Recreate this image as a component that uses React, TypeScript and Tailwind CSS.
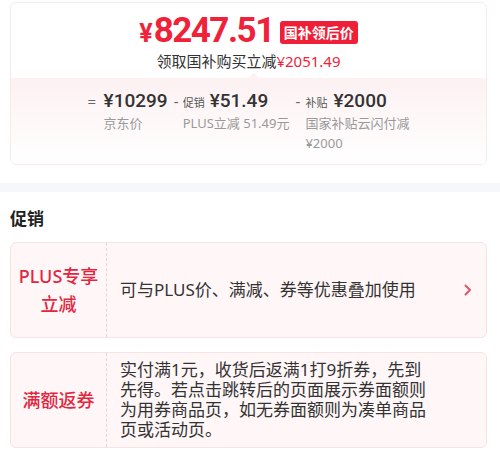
import React from "react";

const cjk = { fontFamily: '"Noto Sans", "Noto Sans CJK SC", sans-serif' };
const num = { fontFamily: 'Roboto, "Noto Sans CJK SC", sans-serif' };

function Breakdown() {
  return (
    <div className="relative bg-gradient-to-b from-[#fdf1f2] to-white pt-[11px] pb-[11px]">
      {/* little notch pointing at the price */}
      <span className="absolute -top-[5px] left-[238px] h-0 w-0 border-x-[5px] border-b-[5px] border-x-transparent border-b-[#fdf1f2]" />
      <div className="flex justify-center pl-[2px]" style={cjk}>
        <div className="flex items-start">
          <span className="mr-[8px] w-[8px] text-[15px] leading-[24px] text-[#666]">=</span>
          <div className="flex flex-col">
            <span className="h-[24px] text-[19px] font-medium leading-[24px] text-[#333]" style={num}>
              ¥10299
            </span>
            <span className="text-[13px] leading-[20px] text-[#999]">京东价</span>
          </div>
        </div>
        <div className="ml-[6px] flex items-start">
          <span className="mr-[5px] w-[4px] text-[15px] leading-[24px] text-[#666]">-</span>
          <div className="flex flex-col">
            <span className="flex h-[24px] items-baseline leading-[24px]">
              <span className="mr-[5px] text-[11px] text-[#555]">促销</span>
              <span className="text-[19px] font-medium text-[#333]" style={num}>
                ¥51.49
              </span>
            </span>
            <span className="whitespace-nowrap text-[13px] leading-[20px] text-[#999]">
              PLUS立减 51.49元
            </span>
          </div>
        </div>
        <div className="ml-[6px] flex items-start">
          <span className="mr-[6px] w-[4px] text-[15px] leading-[24px] text-[#666]">-</span>
          <div className="flex w-[106px] flex-col">
            <span className="flex h-[24px] items-baseline leading-[24px]">
              <span className="mr-[6px] text-[11px] text-[#555]">补贴</span>
              <span className="text-[19px] font-medium text-[#333]" style={num}>
                ¥2000
              </span>
            </span>
            <span className="text-[13px] leading-[20px] text-[#999]">
              国家补贴云闪付减¥2000
            </span>
          </div>
        </div>
      </div>
    </div>
  );
}

function PromoCard({
  label,
  children,
  arrow,
}: {
  label: React.ReactNode;
  children: React.ReactNode;
  arrow?: boolean;
}) {
  return (
    <div className="flex min-h-[96px] overflow-hidden rounded-md border border-[#f6e3e6] bg-[#fff6f7]">
      <div className="flex w-[96px] shrink-0 items-center justify-center border-r border-dashed border-[#ead3d7] text-center text-[18px] font-medium leading-[28px] text-[#e3263f]">
        {label}
      </div>
      <div className="flex flex-1 items-center pl-[13px] pr-[14px]">
        <div className="w-[308px] text-[17px] leading-[20px] text-[#333]">{children}</div>
        {arrow && (
          <svg className="ml-auto" width="8" height="12" viewBox="0 0 8 12" fill="none">
            <path d="M1.5 1.5 6 6l-4.5 4.5" stroke="#e0566b" strokeWidth="2" strokeLinecap="round" strokeLinejoin="round" />
          </svg>
        )}
      </div>
    </div>
  );
}

export default function App() {
  return (
    <div className="h-[453px] w-[500px] overflow-hidden bg-white" style={cjk}>
      <div className="ml-[10px] mr-[13px] mt-[2px] overflow-hidden rounded-md border border-[#f8eaec] bg-white">
        <div className="flex flex-col items-center pt-[8px]">
          <div className="flex h-[40px] items-center">
            <span className="flex h-[40px] items-baseline font-bold text-[#f0223a]" style={num}>
              <span className="mr-[1px] text-[25px] leading-[40px]">¥</span>
              <span className="text-[35px] leading-[40px] tracking-[-1.5px]">8247.51</span>
            </span>
            <span className="ml-[6px] mt-[3px] h-[23px] rounded-[3px] bg-[#ee1f37] px-[4px] text-[14px] font-bold leading-[23px] text-white">
              国补领后价
            </span>
          </div>
          <div className="h-[20px] text-[15px] leading-[20px] text-[#333]">
            领取国补购买立减<span className="text-[#f0223a]">¥2051.49</span>
          </div>
        </div>
        <div className="mt-[7px]">
          <Breakdown />
        </div>
      </div>

      <div className="mt-[18px] h-[9px] bg-[#f5f7fa]" />

      <div className="px-[10px] pr-[13px]">
        <h2 className="mt-[15px] h-[24px] text-[17px] font-bold leading-[24px] text-[#222]">促销</h2>
        <div className="mt-[11px]">
          <PromoCard
            arrow
            label={
              <>
                PLUS专享
                <br />
                立减
              </>
            }
          >
            可与PLUS价、满减、券等优惠叠加使用
          </PromoCard>
        </div>
        <div className="mt-[14px]">
          <PromoCard label="满额返券">
            实付满1元，收货后返满1打9折券，先到先得。若点击跳转后的页面展示券面额则为用券商品页，如无券面额则为凑单商品页或活动页。
          </PromoCard>
        </div>
      </div>
    </div>
  );
}
